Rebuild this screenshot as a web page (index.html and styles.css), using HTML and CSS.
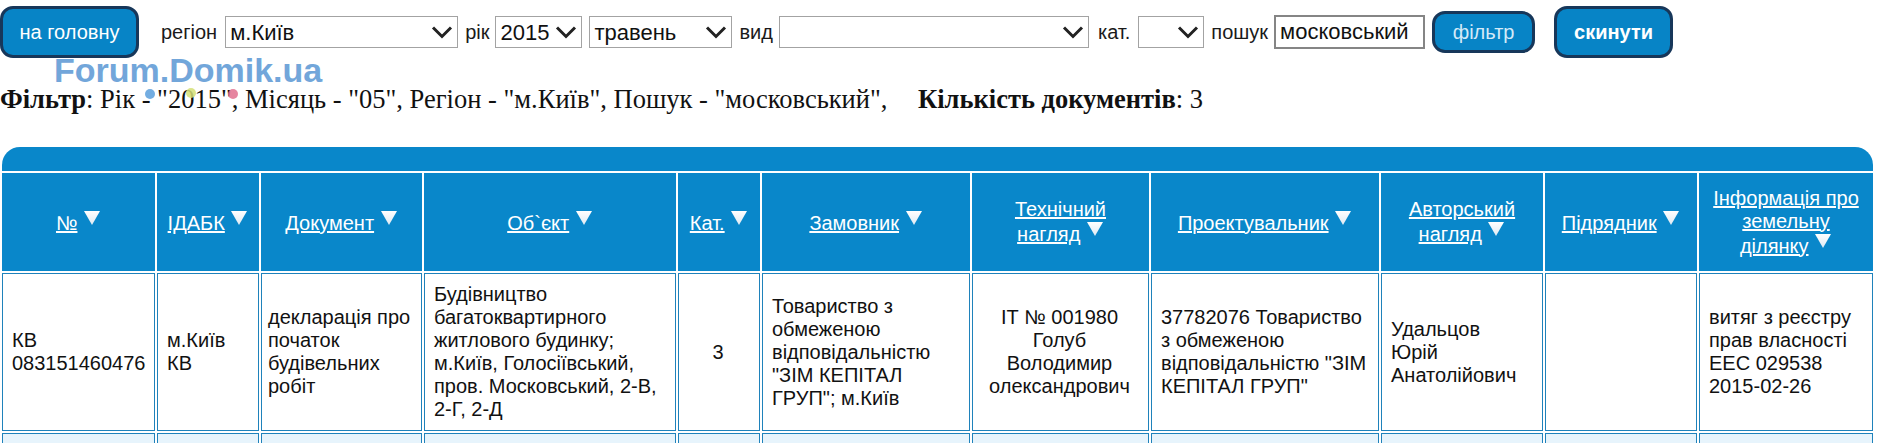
FILE: index.html
```html
<!DOCTYPE html>
<html lang="uk">
<head>
<meta charset="UTF-8" />
<title>Реєстр дозвільних документів</title>
<link rel="stylesheet" href="styles.css">
</head>
<body>

<svg class="defs" width="0" height="0" aria-hidden="true">
  <defs>
    <linearGradient id="triFill" x1="0" y1="0" x2="0" y2="1">
      <stop offset="0" stop-color="#ffffff" />
      <stop offset="1" stop-color="#dfeaf3" />
    </linearGradient>
  </defs>
</svg>

<form class="toolbar" onsubmit="return false;">
  <button type="button" class="btn btn-home">на головну</button>
  <span class="lbl lbl-first">регіон</span>
  <span class="sel sel-region">
    <select><option>м.Київ</option></select>
    <svg viewBox="0 0 30 30"><rect width="30" height="30" fill="#fff"/><path d="M6 10.5 L15 19.5 L24 10.5" /></svg>
  </span>
  <span class="lbl">рік</span>
  <span class="sel sel-year">
    <select><option>2015</option></select>
    <svg viewBox="0 0 30 30"><rect width="30" height="30" fill="#fff"/><path d="M6 10.5 L15 19.5 L24 10.5" /></svg>
  </span>
  <span class="sel sel-month">
    <select><option>травень</option></select>
    <svg viewBox="0 0 30 30"><rect width="30" height="30" fill="#fff"/><path d="M6 10.5 L15 19.5 L24 10.5" /></svg>
  </span>
  <span class="lbl">вид</span>
  <span class="sel sel-kind">
    <select><option></option></select>
    <svg viewBox="0 0 30 30"><rect width="30" height="30" fill="#fff"/><path d="M6 10.5 L15 19.5 L24 10.5" /></svg>
  </span>
  <span class="lbl lbl-cat">кат.</span>
  <span class="sel sel-cat">
    <select><option></option></select>
    <svg viewBox="0 0 30 30"><rect width="30" height="30" fill="#fff"/><path d="M6 10.5 L15 19.5 L24 10.5" /></svg>
  </span>
  <span class="lbl">пошук</span>
  <input type="text" class="search" value="московський" />
  <button type="submit" class="btn btn-filter">фільтр</button>
  <button type="button" class="btn btn-reset">скинути</button>
</form>

<div class="watermark">Forum.Domik.ua</div>
<span class="dot dot-blue"></span>
<span class="dot dot-lime"></span>
<span class="dot dot-pink"></span>

<p class="filter-info"><b>Фільтр</b>: Рік - "2015", Місяць - "05", Регіон - "м.Київ", Пошук - "московський", <span class="gap"></span><b>Кількість документів</b>: 3</p>

<table class="docs">
  <colgroup>
    <col class="c-num"><col class="c-idabk"><col class="c-doc"><col class="c-obj"><col class="c-cat"><col class="c-cust">
    <col class="c-tech"><col class="c-proj"><col class="c-auth"><col class="c-contr"><col class="c-land">
  </colgroup>
  <tr class="band"><th colspan="11"></th></tr>
  <tr class="head">
    <th><a href="#">№</a> <svg class="sort" viewBox="0 0 18 16"><polygon points="1,1 17,1 9,15" /></svg></th>
    <th><a href="#">ІДАБК</a> <svg class="sort" viewBox="0 0 18 16"><polygon points="1,1 17,1 9,15" /></svg></th>
    <th><a href="#">Документ</a> <svg class="sort" viewBox="0 0 18 16"><polygon points="1,1 17,1 9,15" /></svg></th>
    <th><a href="#">Об`єкт</a> <svg class="sort" viewBox="0 0 18 16"><polygon points="1,1 17,1 9,15" /></svg></th>
    <th><a href="#">Кат.</a> <svg class="sort" viewBox="0 0 18 16"><polygon points="1,1 17,1 9,15" /></svg></th>
    <th><a href="#">Замовник</a> <svg class="sort" viewBox="0 0 18 16"><polygon points="1,1 17,1 9,15" /></svg></th>
    <th><a href="#">Технічний нагляд</a> <svg class="sort" viewBox="0 0 18 16"><polygon points="1,1 17,1 9,15" /></svg></th>
    <th><a href="#">Проектувальник</a> <svg class="sort" viewBox="0 0 18 16"><polygon points="1,1 17,1 9,15" /></svg></th>
    <th><a href="#">Авторський нагляд</a> <svg class="sort" viewBox="0 0 18 16"><polygon points="1,1 17,1 9,15" /></svg></th>
    <th><a href="#">Підрядник</a> <svg class="sort" viewBox="0 0 18 16"><polygon points="1,1 17,1 9,15" /></svg></th>
    <th><a href="#">Інформація про земельну ділянку</a> <svg class="sort" viewBox="0 0 18 16"><polygon points="1,1 17,1 9,15" /></svg></th>
  </tr>
  <tr class="row">
    <td>КВ 083151460476</td>
    <td>м.Київ КВ</td>
    <td class="tight">декларація про початок будівельних робіт</td>
    <td>Будівництво багатоквартирного житлового будинку; м.Київ, Голосіївський, пров. Московський, 2-В, 2-Г, 2-Д</td>
    <td class="mid">3</td>
    <td>Товариство з обмеженою відповідальністю "ЗІМ КЕПІТАЛ ГРУП"; м.Київ</td>
    <td class="mid">ІТ № 001980 Голуб Володимир олександрович</td>
    <td>37782076 Товариство з обмеженою відповідальністю "ЗІМ КЕПІТАЛ ГРУП"</td>
    <td>Удальцов Юрій Анатолійович</td>
    <td></td>
    <td>витяг з реєстру прав власності ЕЕС 029538 2015-02-26</td>
  </tr>
  <tr class="row alt">
    <td>КВ 083151460477</td>
    <td>м.Київ КВ</td>
    <td class="tight">декларація про початок будівельних робіт</td>
    <td>Будівництво багатоквартирного житлового будинку з вбудовано-прибудованими приміщеннями та підземним паркінгом; м.Київ, Голосіївський, пров. Московський, 2-В, 2-Г, 2-Д</td>
    <td class="mid">3</td>
    <td>Товариство з обмеженою відповідальністю "ЗІМ КЕПІТАЛ ГРУП"</td>
    <td class="mid">ІТ № 001980 Голуб Володимир</td>
    <td>37782076 Товариство з обмеженою відповідальністю</td>
    <td>Удальцов Юрій Анатолійович</td>
    <td></td>
    <td>витяг з реєстру прав власності</td>
  </tr>
</table>

</body>
</html>
```

FILE: styles.css
```css
body {
  margin: 0;
  font-family: "Liberation Sans", Arial, sans-serif;
  font-size: 20px;
  color: #111;
  background: #fff;
  position: relative;
}
.defs {
  position: absolute;
}

/* верхня панель фільтра */
.toolbar {
  display: flex;
  align-items: center;
  height: 52px;
  padding-top: 6px;
}
.btn {
  font-family: "Liberation Sans", Arial, sans-serif;
  font-size: 20px;
  color: #fff;
  background: #0784c6;
  border: 3px solid #17375a;
  border-radius: 13px;
  cursor: pointer;
  padding: 0;
}
.btn-home {
  width: 139px;
  height: 52px;
}
.btn-filter {
  width: 103px;
  height: 42px;
  margin-left: 7px;
  color: #d4eaf8;
}
.btn-reset {
  width: 119px;
  height: 52px;
  margin-left: 19px;
  font-weight: 700;
}
.lbl {
  margin: 0 6px 0 7px;
  color: #1a1a1a;
}
.lbl-first {
  margin: 0 8px 0 22px;
}
.lbl-cat {
  margin: 0 8px 0 9px;
}
.sel {
  position: relative;
  display: inline-block;
  height: 32px;
}
.sel select {
  appearance: none;
  -webkit-appearance: none;
  height: 32px;
  border: 1px solid #a3a3a3;
  border-radius: 0;
  background: #fff;
  font-family: "Liberation Sans", Arial, sans-serif;
  font-size: 22px;
  color: #111;
  padding: 0 4px;
  margin: 0;
}
.sel svg {
  position: absolute;
  right: 1px;
  top: 1px;
  width: 30px;
  height: 30px;
  pointer-events: none;
}
.sel svg path {
  fill: none;
  stroke: #222;
  stroke-width: 3;
}
.sel-region select { width: 233px; }
.sel-year select { width: 87px; }
.sel-month select { width: 143px; }
.sel-month { margin-left: 7px; }
.sel-kind select { width: 310px; }
.sel-cat select { width: 66px; }
.search {
  width: 151px;
  height: 34px;
  box-sizing: border-box;
  border: 2px solid #858585;
  font-family: "Liberation Sans", Arial, sans-serif;
  font-size: 22px;
  color: #111;
  padding: 0 4px;
  margin: 0;
}

/* водяний знак */
.watermark {
  position: absolute;
  left: 54px;
  top: 53px;
  font-size: 34px;
  line-height: 34px;
  font-weight: 700;
  color: #72a6da;
  pointer-events: none;
}
.dot {
  position: absolute;
  width: 10px;
  height: 10px;
  border-radius: 50%;
  opacity: 0.85;
}
.dot-blue { left: 145px; top: 89px; background: #5b9fdc; }
.dot-lime { left: 186px; top: 88px; background: #d5df76; }
.dot-pink { left: 228px; top: 89px; background: #e2718f; }

.filter-info {
  margin: 25px 0 0;
  font-family: "Liberation Serif", "Times New Roman", serif;
  font-size: 26.5px;
  line-height: 32px;
  color: #111;
}
.filter-info .gap {
  display: inline-block;
  width: 24px;
}

/* таблиця документів */
.docs {
  margin-top: 30px;
  width: 1875px;
  table-layout: fixed;
  border-collapse: separate;
  border-spacing: 2px;
  background: #fff;
}
.c-num { width: 153px; }
.c-idabk { width: 102px; }
.c-doc { width: 161px; }
.c-obj { width: 252px; }
.c-cat { width: 82px; }
.c-cust { width: 208px; }
.c-tech { width: 177px; }
.c-proj { width: 228px; }
.c-auth { width: 162px; }
.c-contr { width: 152px; }
.c-land { width: 174px; }

.band th {
  height: 24px;
  padding: 0;
  background: #0987ca;
  border-radius: 18px 18px 0 0;
}
.head th {
  background: #0987ca;
  border: 1px solid #0987ca;
  color: #fff;
  font-weight: 400;
  font-size: 20px;
  padding: 8px;
  height: 80px;
  text-align: center;
  vertical-align: middle;
}
.head th a {
  color: #fff;
  text-decoration: underline;
}
.sort {
  width: 18px;
  height: 16px;
  vertical-align: 4px;
}
.sort polygon {
  fill: url(#triFill);
}
.row td {
  border: 1px solid #1f82bb;
  padding: 9px 11px 9px 9px;
  line-height: 23px;
  vertical-align: middle;
  text-align: left;
  background: #fff;
}
.row td.tight {
  padding-left: 6px;
  padding-right: 4px;
}
.row td.mid {
  text-align: center;
}
.row.alt td {
  background: #e7f4fc;
}
```
